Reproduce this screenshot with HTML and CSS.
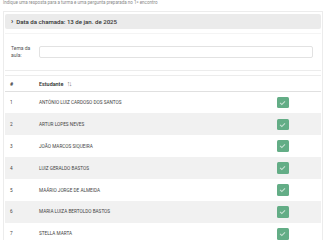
FILE: index.html
```html
<!DOCTYPE html>
<html>
<head>
  <title>Chamada</title>
  <link rel="stylesheet" href="styles.css">
</head>
<body>
  <p class="hint">Indique uma resposta para a turma e uma pergunta preparada no 1º encontro</p>

  <div class="card">
    <div class="collapse-head">
      <span class="chevron">&#8250;</span>
      <span>Data da chamada: 13 de jan. de 2025</span>
    </div>

    <div class="topic">
      <label for="topic">Tema da<br>aula:</label>
      <input type="text" id="topic">
    </div>

    <table class="roster">
      <thead>
        <tr>
          <th class="col-num">#</th>
          <th>Estudante <span class="sort">&#8593;&#8595;</span></th>
          <th class="col-check"></th>
        </tr>
      </thead>
      <tbody>
        <tr><td class="col-num">1</td><td>ANTÔNIO LUIZ CARDOSO DOS SANTOS</td><td class="col-check"><span class="check"></span></td></tr>
        <tr><td class="col-num">2</td><td>ARTUR LOPES NEVES</td><td class="col-check"><span class="check"></span></td></tr>
        <tr><td class="col-num">3</td><td>JOÃO MARCOS SIQUEIRA</td><td class="col-check"><span class="check"></span></td></tr>
        <tr><td class="col-num">4</td><td>LUIZ GERALDO BASTOS</td><td class="col-check"><span class="check"></span></td></tr>
        <tr><td class="col-num">5</td><td>MAÁRIO JORGE DE ALMEIDA</td><td class="col-check"><span class="check"></span></td></tr>
        <tr><td class="col-num">6</td><td>MARIA LUIZA BERTOLDO BASTOS</td><td class="col-check"><span class="check"></span></td></tr>
        <tr><td class="col-num">7</td><td>STELLA MARTA</td><td class="col-check"><span class="check"></span></td></tr>
      </tbody>
    </table>
  </div>
</body>
</html>
```

FILE: styles.css
```css
:root {
  --text: #3a3a3a;
  --text-muted: #8a8a8a;
  --border: #ececec;
  --stripe: #f1f1f1;
  --head: #ebebeb;
  --success: #63ad86;
}

* {
  margin: 0;
  padding: 0;
  box-sizing: border-box;
}

body {
  font-family: Roboto, "Liberation Sans", sans-serif;
  color: var(--text);
  background: #fff;
  overflow: hidden;
}

.hint {
  font-size: 4.5px;
  line-height: 5px;
  color: var(--text-muted);
  margin: 0 0 0 3px;
  white-space: nowrap;
}

.card {
  margin: 6px 5px 0 3px;
  border: 1px solid var(--border);
  padding: 2px 1px 0 1px;
}

.collapse-head {
  display: flex;
  align-items: center;
  gap: 3px;
  height: 15px;
  padding-left: 6px;
  background: var(--head);
  border-radius: 2px;
  font-size: 6.1px;
  font-weight: 500;
  color: #333;
}

.chevron {
  font-size: 7.5px;
  font-weight: 700;
  line-height: 1;
  margin-top: -1px;
}

.topic {
  display: flex;
  align-items: center;
  gap: 8px;
  margin-top: 4px;
  border-top: 1px solid #f4f4f4;
  border-bottom: 1px solid var(--border);
  padding: 11px 8px 11px 6px;
}

.topic label {
  width: 20px;
  font-size: 5px;
  line-height: 7px;
  color: #555;
}

.topic input {
  flex: 1;
  height: 12px;
  border: 1px solid #e2e2e2;
  border-radius: 2px;
  background: #fff;
}

.roster {
  width: 100%;
  margin-top: 4px;
  border-collapse: collapse;
  border-top: 1px solid var(--border);
  font-size: 4.7px;
}

.roster th {
  text-align: left;
  font-size: 5.4px;
  font-weight: 600;
  height: 16px;
  border-bottom: 1.5px solid #e0e0e0;
  color: #333;
}

.roster td {
  height: 21.9px;
  color: #444;
}

.roster tbody tr:nth-child(even) td {
  background: var(--stripe);
}

.col-num {
  width: 34px;
  padding-left: 5px;
}

.col-check {
  width: 44px;
}

.sort {
  font-size: 7px;
  font-weight: 400;
  color: #777;
  margin-left: 2px;
  letter-spacing: -1.5px;
}

.check {
  display: block;
  width: 11.5px;
  height: 11.5px;
  border-radius: 1.5px;
  background: var(--success);
  position: relative;
}

.check::after {
  content: "";
  position: absolute;
  left: 4px;
  top: 3px;
  width: 2.2px;
  height: 4px;
  border: solid rgba(255, 255, 255, 0.65);
  border-width: 0 0.7px 0.7px 0;
  transform: rotate(45deg);
}
```
